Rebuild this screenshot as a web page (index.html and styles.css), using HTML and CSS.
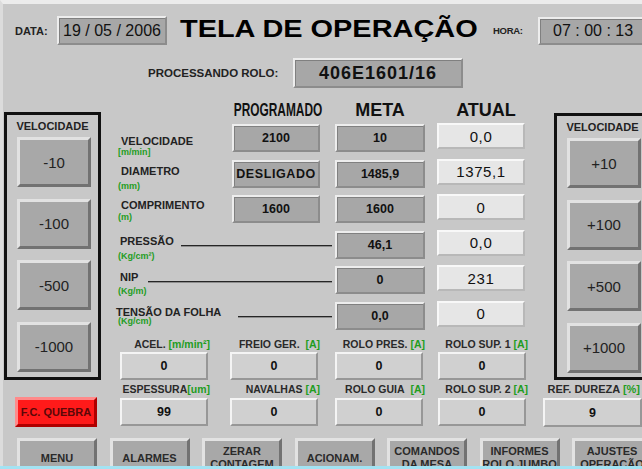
FILE: index.html
```html
<!DOCTYPE html>
<html lang="pt">
<head>
<meta charset="utf-8">
<title>Tela de Operação</title>
<link rel="stylesheet" href="styles.css">
</head>
<body>
<div class="screen">
  <div class="content">
    <div class="hdr">
      <span class="lbl-data">DATA:</span>
      <div class="field f-date">19 / 05 / 2006</div>
      <h1 class="title"><span>TELA DE OPERAÇÃO</span></h1>
      <span class="lbl-hora">HORA:</span>
      <div class="field f-time">07 : 00 : 13</div>
    </div>
    <div class="proc">
      <span class="lbl-proc">PROCESSANDO ROLO:</span>
      <div class="field f-rolo">406E1601/16</div>
    </div>
    <div class="body">
      <div class="side-left">
        <div class="velbox">
          <div class="vel-title">VELOCIDADE</div>
          <div class="vbtns">
            <div class="btn vbtn">-10</div>
            <div class="btn vbtn">-100</div>
            <div class="btn vbtn">-500</div>
            <div class="btn vbtn">-1000</div>
          </div>
        </div>
        <div class="btn btn-red">F.C. QUEBRA</div>
      </div>

      <div class="mid">
        <div class="thead">
          <div class="th th-prog"><span>PROGRAMADO</span></div>
          <div class="th th-meta">META</div>
          <div class="th th-atual">ATUAL</div>
        </div>
        <div class="rows">
          <div class="lab r1"><div class="nm">VELOCIDADE</div><div class="un">[m/min]</div></div>
          <div class="field fd c-prog">2100</div>
          <div class="field fd c-meta">10</div>
          <div class="field fa c-atual">0,0</div>

          <div class="lab r2"><div class="nm">DIAMETRO</div><div class="un">(mm)</div></div>
          <div class="field fd c-prog sp">DESLIGADO</div>
          <div class="field fd c-meta">1485,9</div>
          <div class="field fa c-atual">1375,1</div>

          <div class="lab r3"><div class="nm">COMPRIMENTO</div><div class="un">(m)</div></div>
          <div class="field fd c-prog">1600</div>
          <div class="field fd c-meta">1600</div>
          <div class="field fa c-atual">0</div>

          <div class="lab lab-wide r4"><div class="nmrow"><span class="nm">PRESSÃO</span><span class="ln"></span></div><div class="un">(Kg/cm²)</div></div>
          <div class="field fd c-meta">46,1</div>
          <div class="field fa c-atual">0,0</div>

          <div class="lab lab-wide r5"><div class="nmrow"><span class="nm">NIP</span><span class="ln"></span></div><div class="un">(Kg/m)</div></div>
          <div class="field fd c-meta">0</div>
          <div class="field fa c-atual">231</div>

          <div class="lab lab-wide r6"><div class="nmrow"><span class="nm">TENSÃO DA FOLHA</span><span class="ln"></span></div><div class="un">(Kg/cm)</div></div>
          <div class="field fd c-meta">0,0</div>
          <div class="field fa c-atual">0</div>
        </div>

        <div class="bgrid">
          <div class="bcol">
            <div class="bl">ACEL. <span class="g">[m/min²]</span></div>
            <div class="field fb">0</div>
            <div class="bl bl2">ESPESSURA<span class="g">[um]</span></div>
            <div class="field fb">99</div>
          </div>
          <div class="bcol">
            <div class="bl">FREIO GER.&nbsp; <span class="g">[A]</span></div>
            <div class="field fb">0</div>
            <div class="bl bl2">NAVALHAS <span class="g">[A]</span></div>
            <div class="field fb">0</div>
          </div>
          <div class="bcol">
            <div class="bl">ROLO PRES. <span class="g">[A]</span></div>
            <div class="field fb">0</div>
            <div class="bl bl2">ROLO GUIA&nbsp; <span class="g">[A]</span></div>
            <div class="field fb">0</div>
          </div>
          <div class="bcol">
            <div class="bl">ROLO SUP. 1 <span class="g">[A]</span></div>
            <div class="field fb">0</div>
            <div class="bl bl2">ROLO SUP. 2 <span class="g">[A]</span></div>
            <div class="field fb">0</div>
          </div>
        </div>
      </div>

      <div class="side-right">
        <div class="velbox">
          <div class="vel-title">VELOCIDADE</div>
          <div class="vbtns">
            <div class="btn vbtn">+10</div>
            <div class="btn vbtn">+100</div>
            <div class="btn vbtn">+500</div>
            <div class="btn vbtn">+1000</div>
          </div>
        </div>
        <div class="bl bl2 ref-l">REF. DUREZA <span class="g">[%]</span></div>
        <div class="field fb ref-f">9</div>
      </div>
    </div>

    <div class="menu">
      <div class="btn mbtn">MENU</div>
      <div class="btn mbtn">ALARMES</div>
      <div class="btn mbtn">ZERAR<br>CONTAGEM</div>
      <div class="btn mbtn">ACIONAM.</div>
      <div class="btn mbtn">COMANDOS<br>DA MESA</div>
      <div class="btn mbtn">INFORMES<br>ROLO JUMBO</div>
      <div class="btn mbtn">AJUSTES<br>OPERAÇÃO</div>
    </div>
  </div>
  <div class="cyan"></div>
</div>
</body>
</html>
```

FILE: styles.css
```css
* { box-sizing: border-box; margin: 0; padding: 0; }
html, body { width: 642px; height: 469px; overflow: hidden; }
body { background: #c8c8c8; font-family: "Liberation Sans", Arial, sans-serif; color: #222; }

.screen { width: 642px; height: 469px; display: flex; flex-direction: column; overflow: hidden; background: #c8c8c8; }
.content { flex: none; height: 466px; overflow: hidden; border-top: 4px solid #ececec; border-left: 3px solid #dcdcdc; }
.cyan { flex: none; height: 3px; background: #a3e3f3; }

/* generic fields */
.field {
  display: flex; align-items: center; justify-content: center;
  background: #a7a7a7; color: #111; white-space: nowrap; flex: none;
  border: 2px solid; border-color: #ededed #8c8c8c #8c8c8c #ededed;
  box-shadow: inset 1px 1px 0 #808080;
}

/* header */
.hdr { display: flex; align-items: center; height: 29px; margin-top: 12px; padding-left: 12px; }
.lbl-data { width: 42px; flex: none; font-size: 11px; font-weight: bold; color: #222; }
.f-date { width: 110px; height: 29px; font-size: 16px; }
.title { width: 297px; flex: none; margin-left: 13px; font-size: 23.5px; font-weight: bold; color: #000; white-space: nowrap; line-height: 29px; }
.title span { display: inline-block; transform: translateY(-1.5px) scaleX(1.23); transform-origin: left center; }
.lbl-hora { width: 27px; flex: none; margin-left: 16px; font-size: 9.5px; font-weight: bold; letter-spacing: -0.3px; white-space: nowrap; }
.f-time { width: 110px; height: 28px; margin-left: 18px; font-size: 16px; justify-content: flex-start; padding-left: 13px; }

.proc { display: flex; align-items: center; height: 30px; margin-top: 13px; padding-left: 145px; }
.lbl-proc { width: 145px; flex: none; font-size: 11.5px; font-weight: bold; white-space: nowrap; }
.f-rolo { width: 170px; height: 30px; font-size: 18px; font-weight: bold; letter-spacing: 1px; }

/* body */
.body { display: flex; height: 327px; margin-top: 12px; }

.side-left { flex: none; width: 97px; margin-left: 1px; }
.side-right { flex: none; width: 99px; margin-left: 15px; }

.velbox { width: 97px; height: 268px; border: 3px solid #111; }
.side-left .velbox { margin-top: 12px; }
.side-right .velbox { margin-top: 13px; margin-left: 11px; height: 267px; }
.vel-title { height: 22px; line-height: 22px; text-align: center; font-size: 11px; font-weight: bold; color: #222; white-space: nowrap; }
.vbtns { display: flex; flex-direction: column; gap: 11.67px; padding-left: 10px; }

.btn {
  display: flex; align-items: center; justify-content: center; text-align: center; flex: none;
  background: #a8a8a8; color: #222;
  border: 3px solid; border-color: #e2e2e2 #727272 #727272 #e2e2e2;
}
.vbtn { width: 74px; height: 50px; font-size: 15px; }
.btn-red {
  width: 82px; height: 30px; margin-top: 17px; margin-left: 11px;
  background: #ff1a1a; border-color: #ff8a8a #b00000 #b00000 #ff8a8a;
  color: #5a0808; font-size: 11px; font-weight: bold; white-space: nowrap;
}

/* middle table */
.mid { flex: none; width: 411px; margin-left: 16px; }
.thead, .rows { display: grid; grid-template-columns: 115px 88px 15px 90px 12px 88px; }
.thead { height: 24px; }
.th { display: flex; justify-content: center; font-size: 18px; font-weight: bold; color: #111; line-height: 20px; white-space: nowrap; }
.th-prog { grid-column: 2; padding-left: 4px; }
.th-prog span { display: inline-block; transform: scaleX(0.66); }
.th-meta { grid-column: 4; }
.th-atual { grid-column: 6; padding-left: 10px; }

.rows { grid-template-rows: repeat(6, 28px); row-gap: 7.6px; }
.lab { grid-column: 1; white-space: nowrap; }
.lab-wide { grid-column: 1 / 4; padding-right: 3px; }
.c-prog { grid-column: 2; }
.c-meta { grid-column: 4; }
.c-atual { grid-column: 6; }

.nm { display: block; font-size: 11px; font-weight: bold; line-height: 11px; color: #222; }
.un { font-size: 9px; font-weight: bold; line-height: 10px; color: #1f9d1f; padding-left: 1px; }
.nmrow { display: flex; align-items: flex-start; }
.nmrow .nm { flex: none; }
.ln { flex: 1; height: 0; margin-top: 9.5px; border-top: 1px solid #262626; border-bottom: 1px solid #8e8e8e; }

.r1 { padding-top: 11.6px; }
.r2 { padding-top: 6.5px; }
.r3 { padding-top: 4.4px; }
.r1 .nm, .r2 .nm, .r3 .nm { padding-left: 4px; }
.r2 .un { margin-top: 4.2px; }
.r3 .un { margin-top: 1.1px; }
.r4 { padding-top: 4.8px; }
.r5 { padding-top: 5.2px; }
.r6 { padding-top: 4.6px; }
.r4 .nm, .r5 .nm { padding-left: 3px; }
.r6 .nm { margin-left: -1px; }
.r4 .un { margin-top: 4.1px; }
.r5 .un { margin-top: 3.1px; }
.r6 .un { margin-top: -1.9px; }
.r4 .ln { margin-left: 7px; }
.r5 .ln { margin-left: 10px; }
.r6 .ln { margin-left: 17px; }

.fd { height: 28px; font-size: 12.5px; font-weight: bold; }
.sp { letter-spacing: 0.6px; }
.fa {
  height: 26px; margin-top: -1px;
  background: #e6e6e6; border-color: #f8f8f8 #b8b8b8 #b8b8b8 #f8f8f8; box-shadow: none;
  font-size: 15px; font-weight: normal; letter-spacing: 0.6px; color: #111;
}

/* bottom grid */
.bgrid { display: flex; margin-top: 6px; padding-left: 3px; }
.bcol { flex: none; width: 88px; }
.bcol:nth-child(2) { margin-left: 22px; }
.bcol:nth-child(3) { margin-left: 17px; }
.bcol:nth-child(4) { margin-left: 15px; }
.bl {
  height: 16px; line-height: 16px; margin-right: -2px;
  font-size: 10.5px; font-weight: bold; color: #2a2a2a; white-space: nowrap; text-align: right;
}
.bl2 { height: 18px; line-height: 18px; }
.g { color: #1f9d1f; }
.fb {
  height: 28px; background: #d0d0d0;
  border-color: #f4f4f4 #979797 #979797 #f4f4f4; box-shadow: none;
  font-size: 12.5px; font-weight: bold;
}
.ref-l { margin-right: 2px; font-size: 11px; }
.ref-f { width: 99px; height: 29px; }

/* menu */
.menu { display: flex; gap: 12.5px; margin-top: 11px; padding-left: 14px; }
.mbtn { width: 80px; height: 40px; font-size: 11px; font-weight: bold; line-height: 13px; color: #2a2a2a; white-space: nowrap; }
```
